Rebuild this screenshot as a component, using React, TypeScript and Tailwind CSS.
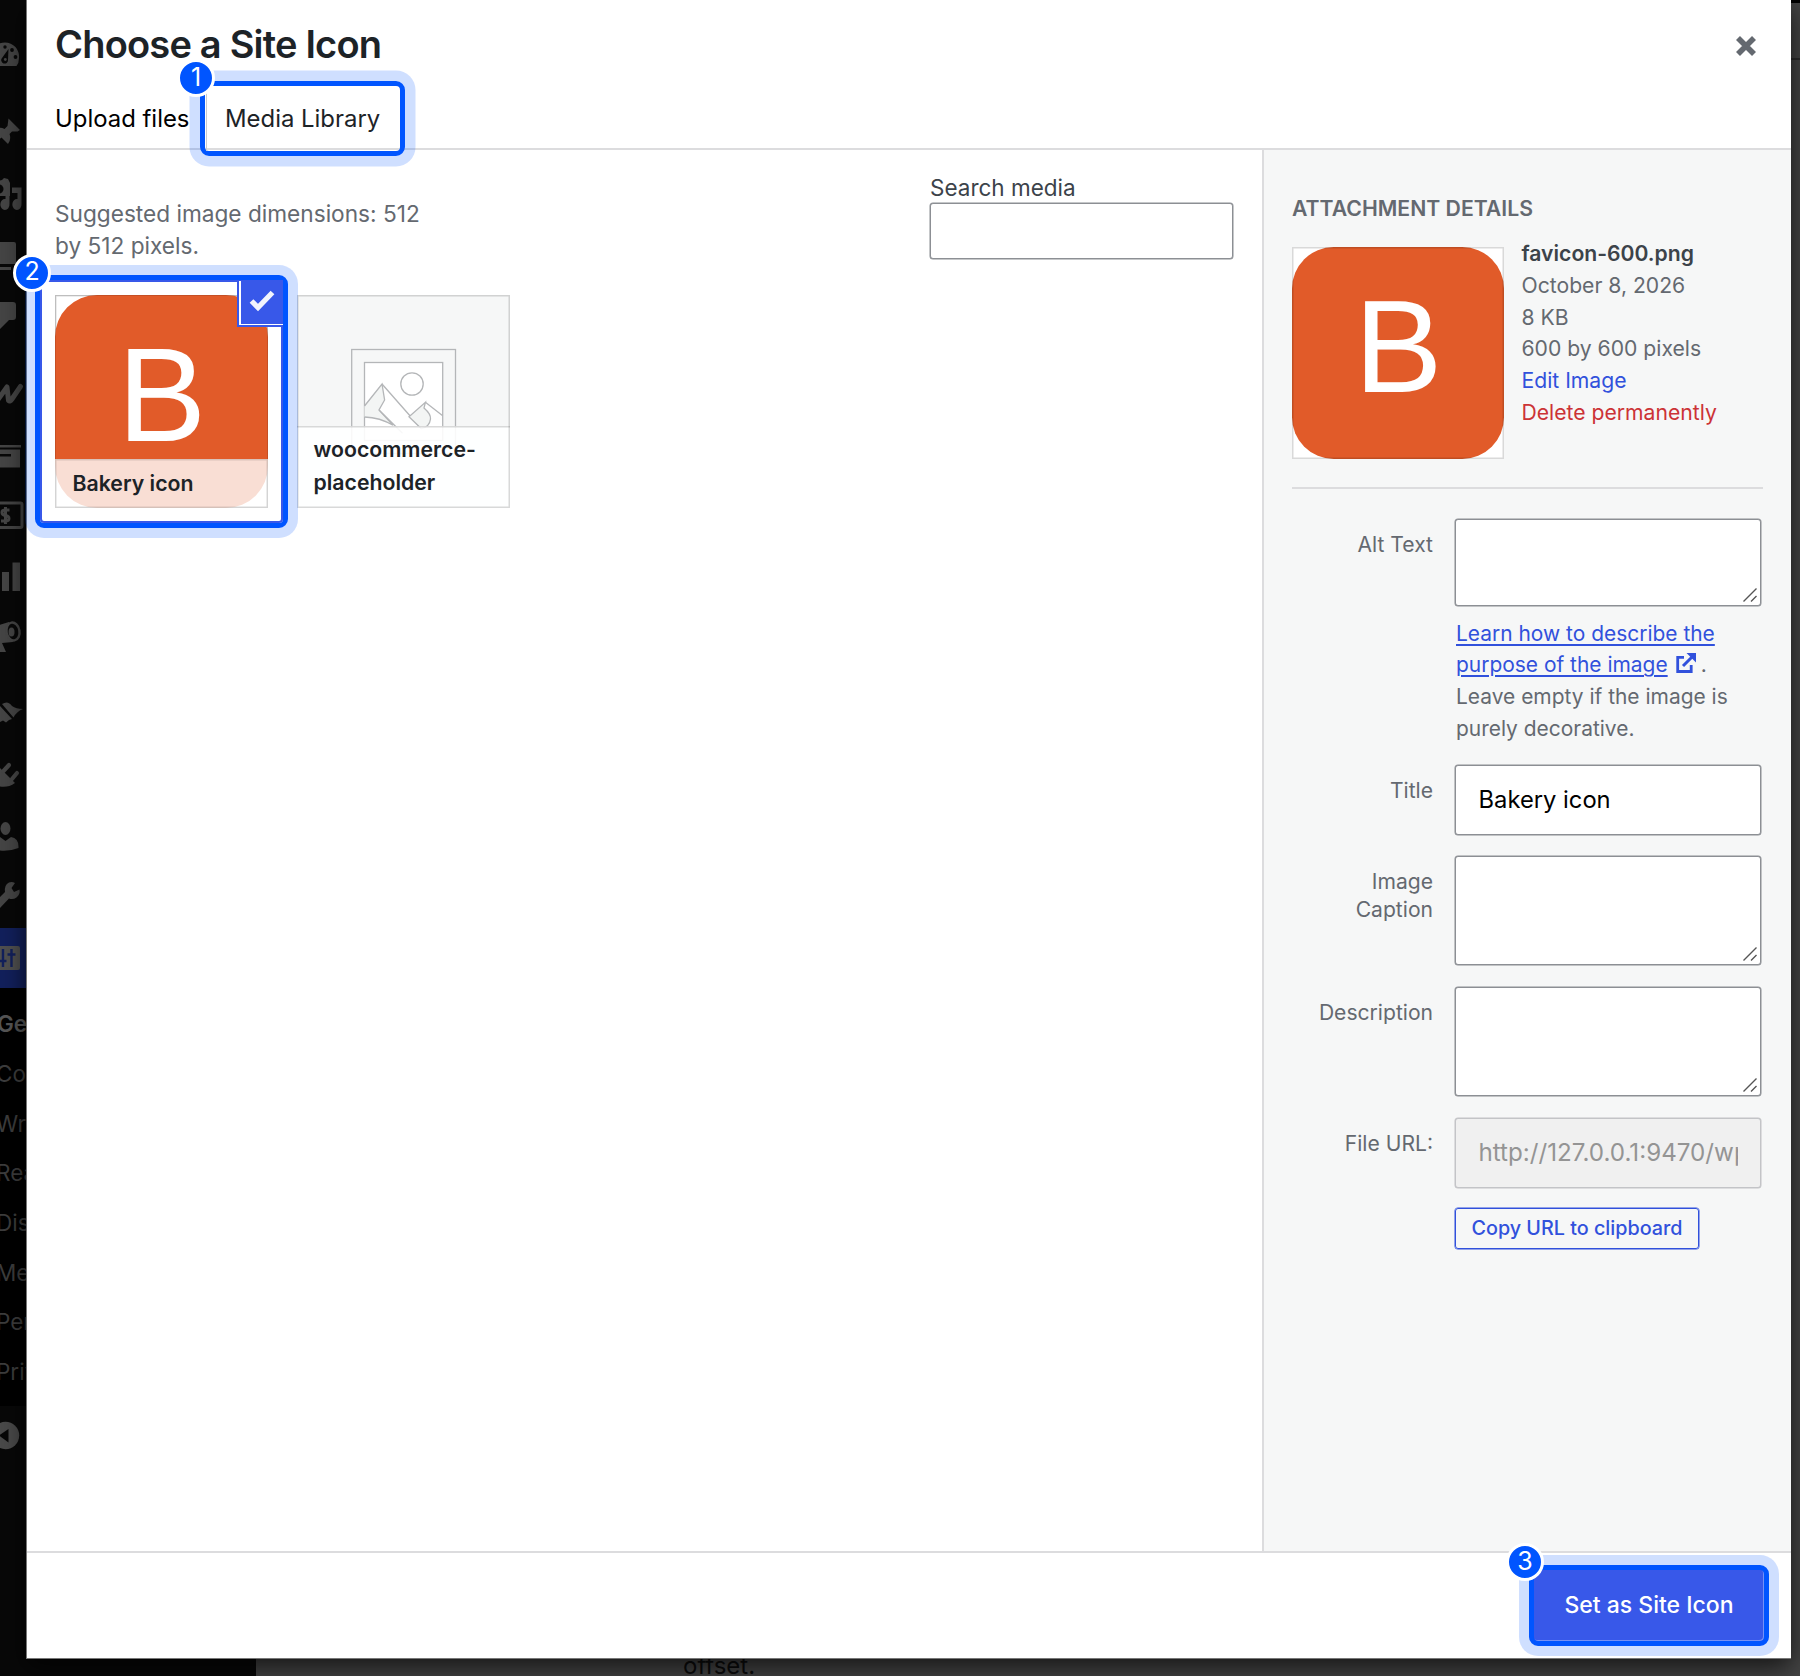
import type { ReactNode } from 'react';

const ICON = '#454545';
const DARK = '#080808';

/* Sidebar entries: each slot is drawn in page coordinates starting at `top`. */
const menu: { top: number; height: number; active?: boolean; art: ReactNode }[] = [
  {
    top: 0,
    height: 98,
    art: (
      <>
        <path d="M-9 66 C-12 62 -12 59 -9.5 54 A15 15 0 0 1 5 42.5 A14 14 0 0 1 19 58 Q19 63 16.5 66 Z" />
        <path d="M8.5 49 L8 60 A3.4 3.4 0 1 1 2 58 Z" fill={DARK} />
        <circle cx="5.3" cy="59.5" r="1.4" />
        <circle cx="5" cy="47" r="1.7" fill={DARK} />
        <circle cx="12" cy="50" r="1.9" fill={DARK} />
        <circle cx="15.5" cy="57" r="1.9" fill={DARK} />
      </>
    ),
  },
  {
    top: 98,
    height: 64,
    art: <path d="M8.5 118.5 L20 130 L17.5 131.5 L12 131.5 L9.5 134 Q11.5 139 8 144 L1.5 137.5 L-4 142 L-8 142 L-4 136 L-6 129.5 Q0 126.5 4.500 129 L7.500 126 Z" />,
  },
  {
    top: 162,
    height: 63,
    art: (
      <>
        <path d="M-8 182 L2 180 L4 178 L8 179 L10 183 V196 H-8 Z" />
        <circle cx="-1" cy="189" r="4.500" fill={DARK} />
        <path d="M12 187.500 H21.500 V204 A4.600 5.500 0 1 1 17.500 199 V193 H12 Z" />
        <path d="M9.500 195 V204 A4.600 5.500 0 1 1 5.500 199 V195 Z" />
      </>
    ),
  },
  { top: 225, height: 60, art: <path d="M0 242 H14 Q16 242 16 244 V264 H0 Z M0 267 H11 V270 H0 Z" /> },
  { top: 285, height: 70, art: <path d="M0 302 H13 Q16 302 16 305 V317 Q16 320 13 320 H9 L0 329 Z" /> },
  {
    top: 355,
    height: 70,
    art: <path d="M-3 401 L7 387 L8.500 400.500 Q10 402 12 399 L20.500 386.500" fill="none" stroke={ICON} strokeWidth="5" strokeLinecap="round" strokeLinejoin="round" />,
  },
  { top: 425, height: 61, art: <path d="M0 445 H21 V447.500 H0 Z M0 449.500 H20 V467.500 H0 V456.500 H11 V454 H0 Z" /> },
  {
    top: 486,
    height: 60,
    art: (
      <>
        <path d="M0 503 H20.500 Q22 503 22 504.500 V526 Q22 527.500 20.500 527.500 H0" fill="none" stroke={ICON} strokeWidth="3" />
        <path d="M9.500 510 H5 Q2 510 2 512.500 Q2 515 5.500 515.500 Q9 516 9 518.500 Q9 521 5.500 521 H1 M5.500 507 V524" fill="none" stroke={ICON} strokeWidth="3" />
      </>
    ),
  },
  { top: 546, height: 61, art: <path d="M2 572 H9 V591 H2 Z M12.500 562.500 H20 V591 H12.500 Z" /> },
  {
    top: 607,
    height: 65,
    art: (
      <>
        <path d="M-4 626 L9 622 L13 642 L2 643 L6 652 H-1 L-4 643 Z" />
        <ellipse cx="13" cy="631.500" rx="6.500" ry="9" transform="rotate(-10 13 631.500)" fill={DARK} stroke={ICON} strokeWidth="2.500" />
        <ellipse cx="11.500" cy="632" rx="3" ry="4.500" />
      </>
    ),
  },
  {
    top: 672,
    height: 72,
    art: (
      <>
        <path d="M2 704 Q8 700 12 706 Q16 709 23 709 Q17 711 13.500 717.500 Z" />
        <path d="M0 706 L12 719 L9 720 L6 722.500 L3 720.500 L0 722 Z" />
      </>
    ),
  },
  {
    top: 744,
    height: 62,
    art: (
      <>
        <path d="M0 768 L15 783 Q8 788 0 786.500 Z" />
        <path d="M3.500 771 L9 765 M12 779 L17 773" fill="none" stroke={ICON} strokeWidth="4.200" strokeLinecap="round" />
      </>
    ),
  },
  {
    top: 806,
    height: 60,
    art: (
      <>
        <ellipse cx="5.500" cy="828.500" rx="5" ry="6.500" />
        <path d="M-8 849 Q-8 838 0 837 L5.500 841 L11 837 Q19 838 18.500 848 Q6 853 -8 849 Z" />
      </>
    ),
  },
  {
    top: 866,
    height: 62,
    art: <path d="M0 897 L5 892 Q4 885 9 882.500 Q12 881.500 15 883 L11.500 888 L14 892 L19.500 889.500 Q20.500 894 16.500 897.500 Q13 900 9 898.500 L0 908 Z" />,
  },
  {
    top: 928,
    height: 60,
    active: true,
    art: (
      <>
        <path d="M0 946 H18 Q20 946 20 948 V968 Q20 970 18 970 H0 Z" fill="#505050" />
        <path d="M11.500 949 V967 M7.500 954.500 H15.500 M3 949 V967 M0 961 H6.500" fill="none" stroke="#12205c" strokeWidth="2.400" />
      </>
    ),
  },
];

const submenu = ['Comments', 'Writing', 'Reading', 'Discussion', 'Media', 'Permalinks', 'Privacy'];

function Sidebar() {
  return (
    <div className="flex h-full w-[256px] shrink-0 flex-col overflow-hidden bg-[#080808]">
      {menu.map((m) => (
        <div key={m.top} className={m.active ? 'bg-[#12205c]' : ''}>
          <svg width="27" height={m.height} viewBox={`0 ${m.top} 27 ${m.height}`} fill={ICON} className="block">
            {m.art}
          </svg>
        </div>
      ))}
      <div className="flex h-[418px] flex-col bg-black pt-[11px] text-[22.5px] leading-[50px] text-[#3d3d3d]">
        <div className="-ml-[3px] font-semibold text-[#565656]">General</div>
        {submenu.map((s) => (
          <div key={s} className="-ml-[4px] h-[49.7px]">
            {s}
          </div>
        ))}
      </div>
      <svg width="27" height="60" viewBox="0 1406 27 60" className="block">
        <circle cx="5.500" cy="1435.500" r="13.700" fill="#4a4a4a" />
        <path d="M8.500 1429 V1442.500 L-1 1435.500 Z" fill={DARK} />
      </svg>
    </div>
  );
}

function Badge({ n, className }: { n: number; className: string }) {
  return (
    <span
      className={`absolute flex size-[38px] items-center justify-center rounded-full border-[3px] border-white bg-[#0055ff] text-[25px] leading-none font-normal text-white ${className}`}
    >
      <span className="mb-[2px]">{n}</span>
    </span>
  );
}

function Field({ label, children }: { label: ReactNode; children: ReactNode }) {
  return (
    <div className="flex justify-end gap-[22px]">
      <div className="pt-[11.5px] text-right text-[21.1px] leading-[28.3px] text-[#646970]">{label}</div>
      <div className="w-[306px] shrink-0">{children}</div>
    </div>
  );
}

function Area({ className }: { className: string }) {
  return (
    <div className={`flex items-end justify-end rounded-[3px] border border-[#8c8f94] bg-white p-[3px] shadow-[0_0_0_0.5px_#8c8f94] ${className}`}>
      <svg width="14" height="14" viewBox="0 0 14 14" fill="none" stroke="#555" strokeWidth="1.400">
        <path d="M0.500 13.500 L13.500 0.500 M8 13.500 L13.500 8" />
      </svg>
    </div>
  );
}

function BakeryIcon({ radius }: { radius: number }) {
  return (
    <svg width="100%" height="100%" viewBox="0 0 213 213" className="block">
      <rect width="213" height="213" rx={radius} fill="#e15b29" />
      <text x="62.500" y="145.500" fontFamily="Liberation Sans, Arial, sans-serif" fontSize="133" fill="#fff">
        B
      </text>
    </svg>
  );
}

function Placeholder() {
  return (
    <svg width="212" height="212" viewBox="297 295 212 212" fill="none" stroke="#b4b6b8" strokeWidth="1.300" className="block">
      <rect x="351.700" y="349.500" width="103.800" height="104" />
      <rect x="364.500" y="362.500" width="78.200" height="78" fill="#fff" />
      <path d="M364.500 406 L382 384 L384.600 400 L379 410 L393 425.300 Q380 417.500 364.500 417" fill="#f3f5f4" />
      <path d="M379 410 L402.500 433.300 M382 384 L421.400 428.700" />
      <path d="M425.400 402.300 L424 408 Q431 414 430.500 419 Q429.500 427 421.400 428.700 L409 416.700 Z" fill="#f3f5f4" />
      <path d="M425.400 402.300 L442.700 415.700" />
      <circle cx="412" cy="384" r="11.200" fill="#fff" />
    </svg>
  );
}

export default function App() {
  return (
    <div className="relative flex h-[1676px] w-[1800px] overflow-hidden bg-[#444444] font-['Inter',sans-serif]">
      <Sidebar />
      <div className="flex flex-1 flex-col justify-between">
        <div className="flex h-[60px] flex-col border-b-2 border-[#2b2b2b]">
          <div className="h-[3px] bg-black" />
        </div>
        <div className="-mb-[8px] pl-[427px] text-[24px] leading-[36px] text-[#0c0c0c]">offset.</div>
      </div>

      <div
        role="dialog"
        className="absolute top-0 left-[26px] flex h-[1659px] w-[1765px] flex-col border-b border-l border-[#777] bg-white shadow-[0_8px_24px_rgba(0,0,0,0.7)]"
      >
        <header className="relative z-10 flex h-[150px] shrink-0 items-start justify-between border-b-2 border-[#dcdcde] pl-[28px]">
          <div>
            <h1 className="mt-[21.5px] text-[38px] leading-[44px] font-semibold tracking-[-0.8px] text-[#1d2327]">Choose a Site Icon</h1>
            <div className="mt-[15.500px] flex h-[75px] text-[23.9px] leading-[32px]">
              <span className="mt-[22px] w-[145px] text-black">Upload files</span>
              <div className="relative h-[75px] w-[205px] rounded-[9px] border-[5px] border-[#0055ff] pt-[17px] pl-[20px] text-[#1d2327] shadow-[0_0_0_10.5px_rgba(0,85,255,0.19)]">
                <span className="absolute inset-y-0 left-[1px] w-px bg-[#c9cbd0]" />
                Media Library
                <Badge n={1} className="-top-[27px] -left-[28px]" />
              </div>
            </div>
          </div>
          <svg width="20" height="20" viewBox="0 0 20 20" className="mt-[36px] mr-[35.500px]" stroke="#646970" strokeWidth="5.600">
            <path d="M2 2 L18 18 M18 2 L2 18" />
          </svg>
        </header>

        <div className="flex min-h-0 flex-1">
          <main className="flex flex-1 flex-col pl-[28px]">
            <div className="flex h-[144.500px] shrink-0 justify-between pr-[29px]">
              <p className="mt-[48px] w-[390px] text-[22.65px] leading-[31.75px] text-[#646970]">
                Suggested image dimensions: 512
                <br />
                by 512 pixels.
              </p>
              <div className="mt-[22.500px] w-[303px]">
                <div className="text-[22.5px] leading-[30px] text-[#3c434a]">Search media</div>
                <div className="mt-[0.500px] h-[55.5px] rounded-[3px] border border-[#8c8f94] bg-white shadow-[0_0_0_0.5px_#8c8f94]" />
              </div>
            </div>

            <div className="flex gap-[29px]">
              <div className="relative z-10 flex size-[213px] flex-col justify-end">
                <div className="absolute -inset-x-[20px] -top-[19.500px] -bottom-[20px] rounded-[9px] border-[5px] border-[#0055ff] bg-white shadow-[inset_0_0_0_2px_#3858e9,0_0_0_10px_rgba(0,85,255,0.19)]" />
                <div className="absolute inset-0 shadow-[inset_0_0_0_1.5px_rgba(0,0,0,0.15)]" />
                <div className="absolute inset-0">
                  <BakeryIcon radius={42} />
                </div>
                <div className="absolute inset-0 shadow-[inset_0_0_0_1px_rgba(0,0,0,0.12)]" />
                <div className="relative h-[49px] bg-white/80 pl-[17.500px] text-[21.27px] leading-[49px] font-semibold text-[#1d2327] shadow-[inset_0_0_0_1.5px_rgba(0,0,0,0.12)]">
                  Bakery icon
                </div>
                <div className="absolute -top-[14px] -right-[15px] flex h-[46px] w-[46px] items-center justify-center border-b-[2px] border-l-[2px] border-[#3858e9] bg-white">
                  <div className="mb-[2px] ml-[2px] flex size-full items-center justify-center bg-[#3858e9]">
                    <svg width="26" height="22" viewBox="0 0 26 22" fill="none" stroke="#f2f4fd" strokeWidth="5.200" className="mb-[1px]">
                      <path d="M2.500 11 L9 17.500 L23.500 2.500" />
                    </svg>
                  </div>
                </div>
                <Badge n={2} className="-top-[41px] -left-[42px]" />
              </div>

              <div className="relative flex size-[213px] flex-col justify-end bg-[#f6f7f7]">
                <div className="absolute inset-0">
                  <Placeholder />
                </div>
                <div className="relative h-[82px] bg-[rgba(255,255,255,0.9)] pt-[7.500px] pl-[16.500px] text-[21.25px] leading-[33.4px] font-semibold text-[#1d2327] shadow-[inset_0_1.5px_0_rgba(0,0,0,0.15)]">
                  woocommerce-
                  <br />
                  placeholder
                </div>
                <div className="absolute inset-0 shadow-[inset_0_0_0_1.5px_rgba(0,0,0,0.15)]" />
              </div>
            </div>
          </main>

          <aside className="flex w-[529px] shrink-0 flex-col border-l-2 border-[#dcdcde] bg-[#f6f7f7] pl-[28px]">
            <h2 className="mt-[41.500px] text-[21.21px] leading-[32px] font-semibold text-[#646970]">ATTACHMENT DETAILS</h2>
            <div className="mt-[13.500px] flex h-[252px] w-[471px] gap-[17.500px] border-b-2 border-[#dcdcde]">
              <div className="relative mt-[10px] size-[212px] shrink-0 bg-white">
                <BakeryIcon radius={42} />
                <div className="absolute inset-0 shadow-[inset_0_0_0_1.5px_rgba(0,0,0,0.15)]" />
              </div>
              <div className="mt-[1px] text-[21.15px] leading-[31.75px] whitespace-nowrap text-[#646970]">
                <div className="font-semibold text-[#3c434a]">favicon-600.png</div>
                <div>October 8, 2026</div>
                <div>8 KB</div>
                <div>600 by 600 pixels</div>
                <div className="text-[#3151dc]">Edit Image</div>
                <div className="text-[#cc3336]">Delete permanently</div>
              </div>
            </div>

            <div className="mt-[30px] flex w-[469px] flex-col gap-[21.8px]">
              <Field label="Alt Text">
                <Area className="h-[87px]" />
                <p className="mt-[11.500px] -mb-[1.2px] ml-[1px] text-[20.95px] leading-[31.75px] whitespace-nowrap text-[#646970]">
                  <span className="text-[#3151dc] underline decoration-[1.5px] underline-offset-[3px]">
                    Learn how to describe the
                    <br />
                    purpose of the image
                  </span>
                  <svg width="20" height="20" viewBox="0 0 20 20" className="mx-[5px] ml-[8px] inline-block align-[-1px]" fill="none" stroke="#3151dc" strokeWidth="2.800">
                    <path d="M8 4.400 H1.700 V18.500 H15.200 V12" />
                    <path d="M7 13 L16.500 3.500" strokeWidth="3" />
                    <path d="M10.500 0 H20 V9.500 Z" fill="#3151dc" stroke="none" />
                  </svg>
                  .
                  <br />
                  Leave empty if the image is
                  <br />
                  purely decorative.
                </p>
              </Field>
              <Field label="Title">
                <div className="h-[69.5px] rounded-[3px] border border-[#8c8f94] bg-white pl-[22.500px] text-[23.75px] leading-[68px] text-black shadow-[0_0_0_0.5px_#8c8f94]">
                  Bakery icon
                </div>
              </Field>
              <Field
                label={
                  <>
                    Image
                    <br />
                    Caption
                  </>
                }
              >
                <Area className="h-[109px]" />
              </Field>
              <Field label="Description">
                <Area className="h-[109px]" />
              </Field>
              <Field label="File URL:">
                <div className="h-[69.5px] rounded-[3px] border border-[#c3c4c7] bg-[#f0f0f0] pr-[22px] pl-[22.500px] text-[24.2px] leading-[68px] text-[#949494] shadow-[0_0_0_0.5px_#c3c4c7]">
                  <div className="overflow-hidden whitespace-nowrap">http://127.0.0.1:9470/wp-content/uploads</div>
                </div>
                <button className="mt-[20.500px] h-[41px] w-[244px] rounded-[3px] border border-[#3151dc] text-[19.75px] leading-[39px] font-medium whitespace-nowrap text-[#3151dc] shadow-[0_0_0_0.5px_#3151dc]">
                  Copy URL to clipboard
                </button>
              </Field>
            </div>
          </aside>
        </div>

        <footer className="relative z-10 flex h-[107px] shrink-0 justify-end border-t-2 border-[#dcdcde] pt-[12px] pr-[22px]">
          <button className="relative h-[81px] w-[240px] rounded-[9px] border-[5px] border-[#0055ff] bg-[#3858e9] text-[23px] font-medium text-white shadow-[inset_-1px_-1px_0_#7590f5,0_0_0_10px_rgba(0,85,255,0.19)]">
            Set as Site Icon
            <Badge n={3} className="-top-[27px] -left-[28px]" />
          </button>
        </footer>
      </div>
    </div>
  );
}
